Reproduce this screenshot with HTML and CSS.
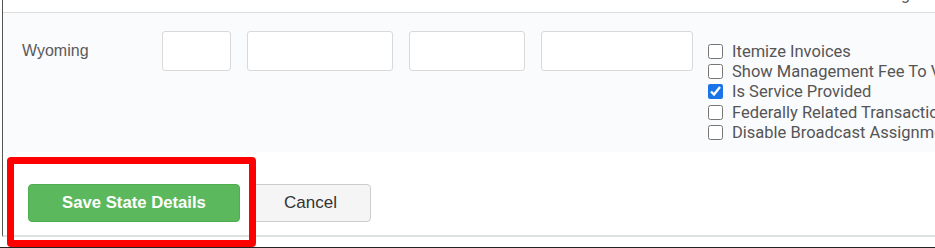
FILE: index.html
```html
<!DOCTYPE html>
<html>
<head>
<meta charset="utf-8">
<link rel="stylesheet" href="styles.css">
</head>
<body>
<div class="frame">
  <div class="topbar"><span class="cut">Billing</span></div>
  <div class="panel">
    <div class="row">
      <div class="state">Wyoming</div>
      <input class="box w1" type="text">
      <input class="box w2" type="text">
      <input class="box w3" type="text">
      <input class="box w4" type="text">
      <div class="checks">
        <label class="chk"><input type="checkbox"><span>Itemize Invoices</span></label>
        <label class="chk"><input type="checkbox"><span>Show Management Fee To Vendor</span></label>
        <label class="chk"><input type="checkbox" checked><span>Is Service Provided</span></label>
        <label class="chk"><input type="checkbox"><span>Federally Related Transaction</span></label>
        <label class="chk"><input type="checkbox"><span>Disable Broadcast Assignment</span></label>
      </div>
    </div>
  </div>
  <div class="actions">
    <button class="btn save">Save State Details</button>
    <button class="btn cancel">Cancel</button>
  </div>
</div>
<div class="gap"></div>
<div class="highlight"></div>
</body>
</html>
```
FILE: styles.css
```css
html, body {
  margin: 0;
  padding: 0;
  background: #ffffff;
  width: 935px;
  height: 248px;
  overflow: hidden;
  position: relative;
}
.frame {
  margin-left: 2px;
  border-left: 1px solid #555;
  border-bottom: 2px solid #dfe3df;
}
.topbar {
  height: 12px;
  overflow: hidden;
  display: flex;
  justify-content: flex-end;
  padding-right: 25px;
  font-family: Roboto, sans-serif;
  font-size: 16px;
  color: #555;
}
.cut {
  display: block;
  line-height: 16px;
  margin-top: -13px;
}
.panel {
  border-top: 1px solid #dddddd;
  background: #fafbfd;
  height: 121px;
  padding-top: 18px;
  padding-left: 19px;
  white-space: nowrap;
  overflow: hidden;
}
.row {
  display: flex;
  align-items: flex-start;
}
.row > * {
  flex-shrink: 0;
}
.state {
  width: 124px;
  margin-right: 16px;
  line-height: 40px;
  font-family: "Liberation Sans", Arial, sans-serif;
  font-size: 16px;
  color: #5a5a5a;
}
.box {
  box-sizing: border-box;
  height: 40px;
  margin: 0 16px 0 0;
  border: 1px solid #d9d9d9;
  border-radius: 3px;
  background: #ffffff;
  padding: 0;
}
.w1 { width: 69px; }
.w2 { width: 146px; }
.w3 { width: 116px; }
.w4 { width: 152px; margin-right: 15px; }
.checks {
  display: flex;
  flex-direction: column;
  padding-top: 10px;
}
.chk {
  display: flex;
  align-items: center;
  height: 20.3px;
  font-family: Roboto, sans-serif;
  font-size: 16.5px;
  color: #555;
}
.chk input {
  width: 15px;
  height: 15px;
  margin: 0 9px 0 0;
  accent-color: #1a73e8;
}
.actions {
  height: 83px;
  box-sizing: border-box;
  padding: 32px 0 0 25px;
  display: flex;
  align-items: flex-start;
}
.btn {
  box-sizing: border-box;
  height: 38px;
  border-radius: 4px;
  font-family: "Liberation Sans", Arial, sans-serif;
  padding: 0;
  flex-shrink: 0;
}
.save {
  width: 212px;
  background: #5cb85c;
  border: 1px solid #4cae4c;
  color: #ffffff;
  font-weight: bold;
  font-size: 16.7px;
}
.cancel {
  width: 121px;
  margin-left: 10px;
  background: #f5f5f5;
  border: 1px solid #cccccc;
  color: #333333;
  font-size: 17px;
}
.gap {
  height: 10px;
  border-bottom: 1px solid #222;
}
.highlight {
  position: absolute;
  left: 7px;
  top: 157px;
  width: 249px;
  height: 90px;
  box-sizing: border-box;
  border: 7px solid #ff0000;
  border-radius: 4px;
}
```
